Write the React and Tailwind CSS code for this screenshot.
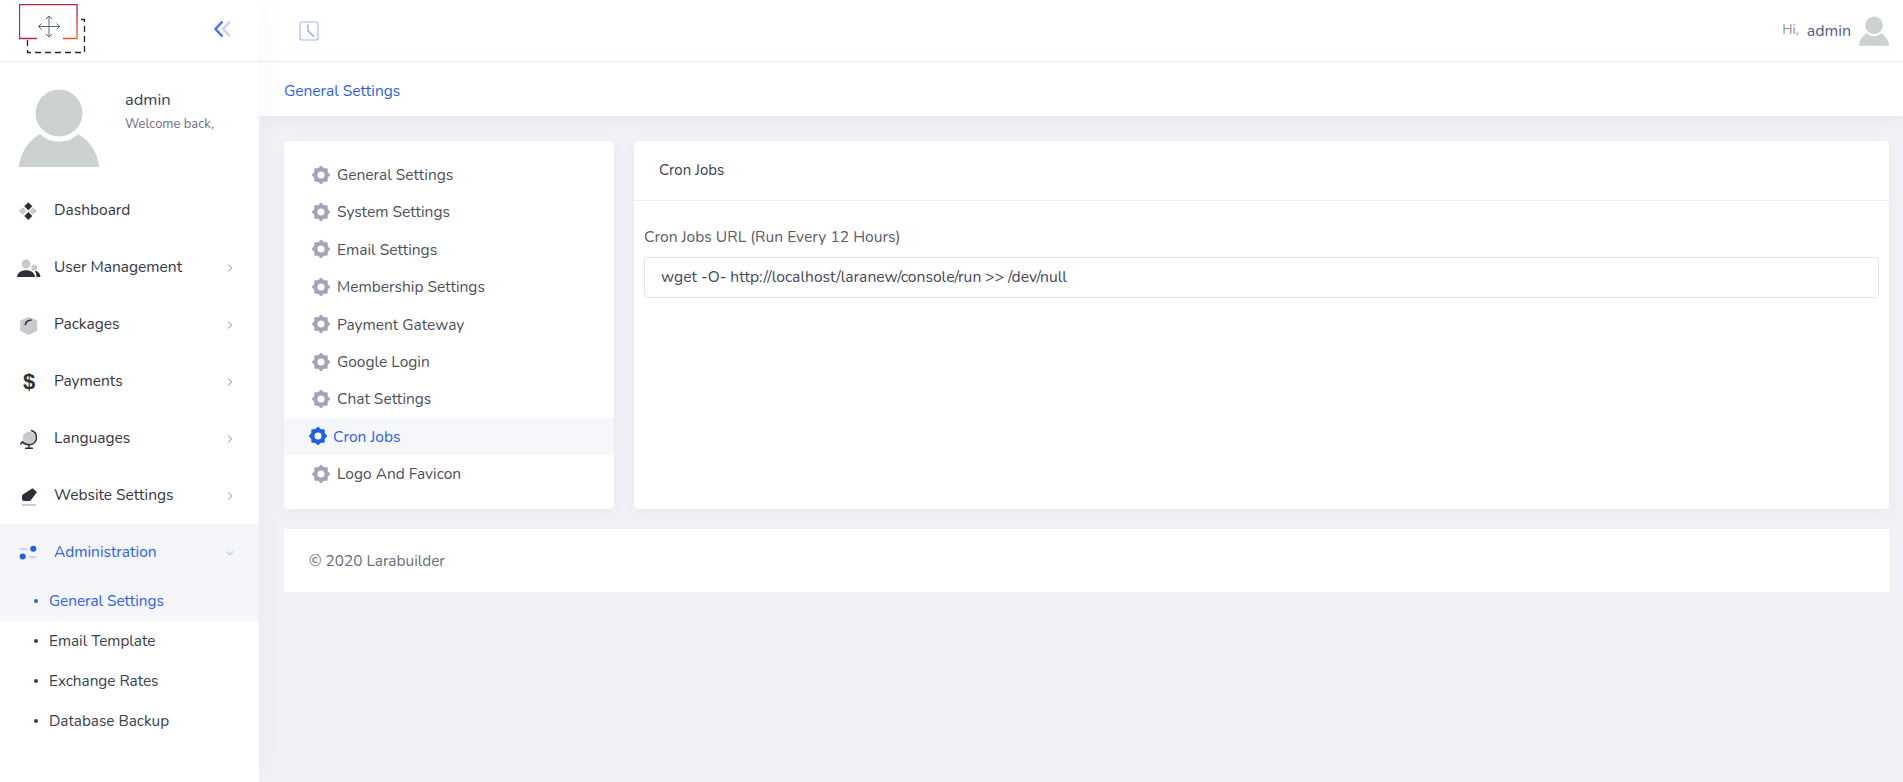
import React from 'react';

const Gear = ({ active }) => (
  <svg width="20" height="20" viewBox="0 0 20 20" className="shrink-0">
    <g fill={active ? '#1f5eea' : '#a2a4b9'}>
      <rect x="3.300" y="3.300" width="13.400" height="13.400" rx="0.800" />
      <rect x="3.300" y="3.300" width="13.400" height="13.400" rx="0.800" transform="rotate(45 10 10)" />
    </g>
    <circle cx="10" cy="10" r="3.500" fill="#fff" />
  </svg>
);

const Chevron = ({ open }) => (
  <svg width="10" height="10" viewBox="0 0 10 10" fill="none" stroke={open ? '#8aa4f2' : '#7c7c86'} strokeWidth="0.9">
    {open ? <path d="M1.500 3.200 5 6.600l3.500-3.400" /> : <path d="M3.200 1.500 6.600 5 3.200 8.500" />}
  </svg>
);

const DashboardIcon = () => (
  <svg width="20" height="20" viewBox="0 0 20 20">
    <path d="M4.800 6.200 8.600 10l-3.800 3.800L1 10zM15 6.200l3.800 3.800-3.800 3.800-3.800-3.800z" fill="#c9cacd" />
    <path d="M10.300 1.300l4 4-4 4-4-4zM10.300 11l4 4-4 4-4-4z" fill="#2c2f3a" />
  </svg>
);

const UsersIcon = () => (
  <svg width="24" height="20" viewBox="0 0 24 20" className="-ml-px">
    <circle cx="9" cy="6" r="4.500" fill="#c9cacd" />
    <circle cx="17.300" cy="9.700" r="3" fill="#c9cacd" />
    <path d="M0 19c.4-4.200 4-6.800 9-6.800s8.600 2.600 9 6.800z" fill="#2c2f3a" />
    <path d="M18 13c2.800-.4 5 2 5.500 6h-4c-.1-2.300-.6-4.400-1.500-6z" fill="#2c2f3a" />
  </svg>
);

const PackageIcon = () => (
  <svg width="20" height="20" viewBox="0 0 20 20">
    <path d="M10.800 2l7.900 3.200.6.900v9.300l-.6.900-7.900 3.600-8-3.600-.6-.9V6.100l.6-.9z" fill="#c9cacd" />
    <path d="M7.500 9.500c.2-2.500 2-4 5.500-4.500" fill="none" stroke="#2c2f3a" strokeWidth="1.700" strokeLinecap="round" />
  </svg>
);

const GlobeIcon = () => (
  <svg width="20" height="20" viewBox="0 0 20 20">
    <circle cx="11" cy="9" r="6.300" fill="#c9cacd" />
    <path d="M13.500 1.500c3 1.200 5 4 5 7.300 0 4.400-3.600 7-7.500 7-2.800 0-5.200-1.200-6.500-3" fill="none" stroke="#2c2f3a" strokeWidth="1.500" strokeLinecap="round" />
    <path d="M4.500 12.800 2.700 15" stroke="#2c2f3a" strokeWidth="1.500" strokeLinecap="round" />
    <path d="M11 16v3M7 19.200h8" stroke="#2c2f3a" strokeWidth="1.500" />
  </svg>
);

const PenIcon = () => (
  <svg width="20" height="20" viewBox="0 0 20 20">
    <path d="M14.500 2.200 19 6l-6 8c-.4.600-1 .9-1.700.9H6c-1.100 0-2-.9-2-2V10c0-.6.300-1.200.8-1.600z" fill="#2c2f3a" />
    <rect x="4" y="18" width="14" height="2" fill="#c9cacd" />
  </svg>
);

const AdminIcon = () => (
  <svg width="20" height="20" viewBox="0 0 20 20">
    <circle cx="15.300" cy="5.800" r="3" fill="#1f5eea" />
    <circle cx="4.700" cy="13.500" r="3" fill="#1f5eea" />
    <rect x="2" y="5" width="7.700" height="2.200" rx="1" fill="#c9d6f8" />
    <rect x="11" y="13" width="7.500" height="2.200" rx="1" fill="#c9d6f8" />
  </svg>
);

const Avatar = ({ className }) => (
  <svg viewBox="0 0 80 78" className={className}>
    <circle cx="40" cy="24" r="23.500" fill="#ccd1d1" />
    <path d="M0 78c.5-12 9-27 21-33 5 5 11 7.500 19 7.500S54 50 59 45c12 6 20.500 21 21 33z" fill="#ccd1d1" />
  </svg>
);

const menu = [
  { label: 'Dashboard', icon: <DashboardIcon /> },
  { label: 'User Management', icon: <UsersIcon />, arrow: true },
  { label: 'Packages', icon: <PackageIcon />, arrow: true },
  { label: 'Payments', icon: <span className="ml-[5px] text-[22px] font-bold text-[#2c2f3a] leading-none font-['Liberation_Sans',sans-serif]">$</span>, arrow: true },
  { label: 'Languages', icon: <GlobeIcon />, arrow: true },
  { label: 'Website Settings', icon: <PenIcon />, arrow: true },
];

const subMenu = ['General Settings', 'Email Template', 'Exchange Rates', 'Database Backup'];

const settings = [
  'General Settings',
  'System Settings',
  'Email Settings',
  'Membership Settings',
  'Payment Gateway',
  'Google Login',
  'Chat Settings',
  'Cron Jobs',
  'Logo And Favicon',
];

function Sidebar() {
  return (
    <aside className="w-[259px] shrink-0 bg-white z-10 shadow-[8px_0_24px_rgba(60,60,90,0.025)]">
      <div className="h-[62px] border-b border-[#eeeeef] flex items-start justify-between pl-[19px] pr-[27px]">
        <svg width="68" height="50" viewBox="0 0 68 50" fill="none" className="mt-[4px]">
          <defs>
            <linearGradient id="logoLine" x1="0" x2="1" y1="0" y2="1">
              <stop offset="0" stopColor="#c2203c" />
              <stop offset="0.6" stopColor="#c2203c" />
              <stop offset="0.95" stopColor="#f25a24" />
            </linearGradient>
          </defs>
          <path d="M18 34.500H.500V.500h57.500v34H44" stroke="url(#logoLine)" strokeWidth="1.300" />
          <path d="M62 15.500h3.500v33H8.500V35" stroke="#16263c" strokeWidth="1.300" strokeDasharray="6 4" />
          <path d="M30 12v21M19.500 22.500h21M27 15l3-3 3 3M27 30l3 3 3-3M22.500 19.500l-3 3 3 3M37.500 19.500l3 3-3 3" stroke="#55677c" strokeWidth="1" />
        </svg>
        <svg width="18" height="18" viewBox="0 0 18 18" fill="none" strokeWidth="2.400" className="mt-[20px]">
          <path d="M16 1.500 9 9l7 7.500" stroke="#c6d0fb" />
          <path d="M8.500 1.500 1.500 9l7 7.500" stroke="#4f6ef7" />
        </svg>
      </div>

      <div className="h-[120px] flex pl-[19px] pt-[27px]">
        <Avatar className="w-[80px] h-[78px]" />
        <div className="ml-[26px]">
          <div className="text-[16.500px] leading-[22px] text-[#3d3f4d]">admin</div>
          <div className="text-[13px] leading-[18px] mt-[4px] text-[#6c6d7e]">Welcome back,</div>
        </div>
      </div>

      <nav>
        {menu.map((item) => (
          <div key={item.label} className="h-[57px] flex items-center pl-[18px] pr-[24px] text-[15.500px] text-[#343645]">
            <span className="w-[36px] flex items-center">{item.icon}</span>
            <span className="flex-1 pb-px">{item.label}</span>
            {item.arrow && <Chevron />}
          </div>
        ))}
        <div className="bg-[#f5f6fb] h-[57px] flex items-center pl-[18px] pr-[24px] text-[15.500px] text-[#2c5fee]">
          <span className="w-[36px] flex items-center"><AdminIcon /></span>
          <span className="flex-1 pb-px">Administration</span>
          <Chevron open />
        </div>
        {subMenu.map((label, i) => (
          <div
            key={label}
            className={`h-[40px] flex items-center pl-[34px] text-[15.300px] ${i === 0 ? 'bg-[#f5f6fb] text-[#2c5fee]' : 'text-[#3b3d4e]'}`}
          >
            <span className={`w-[4px] h-[4px] rounded-full mr-[11px] ${i === 0 ? 'bg-[#2c5fee]' : 'bg-[#3b3d4e]'}`} />
            {label}
          </div>
        ))}
      </nav>
    </aside>
  );
}

function App() {
  return (
    <div className="flex min-h-screen bg-[#f1f2f7] font-['Nunito','Lato',sans-serif] overflow-hidden">
      <Sidebar />
      <div className="flex-1 min-w-0">
        <header className="h-[62px] bg-white border-b border-[#f0f0f3] flex items-center justify-between pl-[40px] pr-[14px]">
          <svg width="20" height="20" viewBox="0 0 20 20" fill="none" strokeWidth="1.200">
            <rect x="1" y="1" width="18" height="18" rx="2" stroke="#aab6f5" />
            <path d="M3 19h14" stroke="#d5dbfb" strokeWidth="2" />
            <path d="M9 3.500V10l6 5.500" stroke="#8c9bef" />
          </svg>
          <div className="flex items-center">
            <span className="text-[13.500px] text-[#8b8da3] mr-[8px]">Hi,</span>
            <span className="text-[16px] text-[#545a80] mr-[8px]">admin</span>
            <Avatar className="w-[30px] h-[30px]" />
          </div>
        </header>

        <div className="h-[54px] bg-white flex items-center pl-[25px] pt-[4px] text-[15.500px] text-[#2c5fee] shadow-[0_4px_16px_rgba(60,60,100,0.06)]">
          General Settings
        </div>

        <main className="pl-[25px] pr-[14px] pt-[25px]">
          <div className="flex gap-[20px]">
            <div className="w-[330px] h-[368px] shrink-0 bg-white rounded-[4px] pt-[15px] shadow-[0_4px_16px_rgba(60,60,100,0.04)]">
              {settings.map((label) => {
                const active = label === 'Cron Jobs';
                return (
                  <div
                    key={label}
                    className={`h-[37.400px] flex items-center text-[15.500px] ${active ? 'pl-[24px] gap-[5px] bg-[#f6f7fb] text-[#2c5fee]' : 'pl-[27px] gap-[6px] text-[#4d4f5e]'}`}
                  >
                    <Gear active={active} />
                    {label}
                  </div>
                );
              })}
            </div>

            <div className="flex-1 h-[368px] bg-white rounded-[4px] shadow-[0_4px_16px_rgba(60,60,100,0.04)]">
              <div className="h-[60px] border-b border-[#eeeff4] flex items-center pl-[25px] text-[15px] text-[#3d3f4f]">
                Cron Jobs
              </div>
              <div className="px-[10px] pt-[25px]">
                <div className="text-[15.600px] leading-[22px] text-[#5a5c6b]">Cron Jobs URL (Run Every 12 Hours)</div>
                <div className="mt-[9px] h-[41px] border border-[#e2e4ea] rounded-[4px] flex items-center pl-[16px] text-[15.650px] text-[#454757]">
                  {'wget -O- http://localhost/laranew/console/run >> /dev/null'}
                </div>
              </div>
            </div>
          </div>

          <footer className="mt-[20px] h-[63px] bg-white flex items-center pl-[25px] text-[15.400px] text-[#6a6c7a]">
            © 2020 Larabuilder
          </footer>
        </main>
      </div>
    </div>
  );
}

export default App;
